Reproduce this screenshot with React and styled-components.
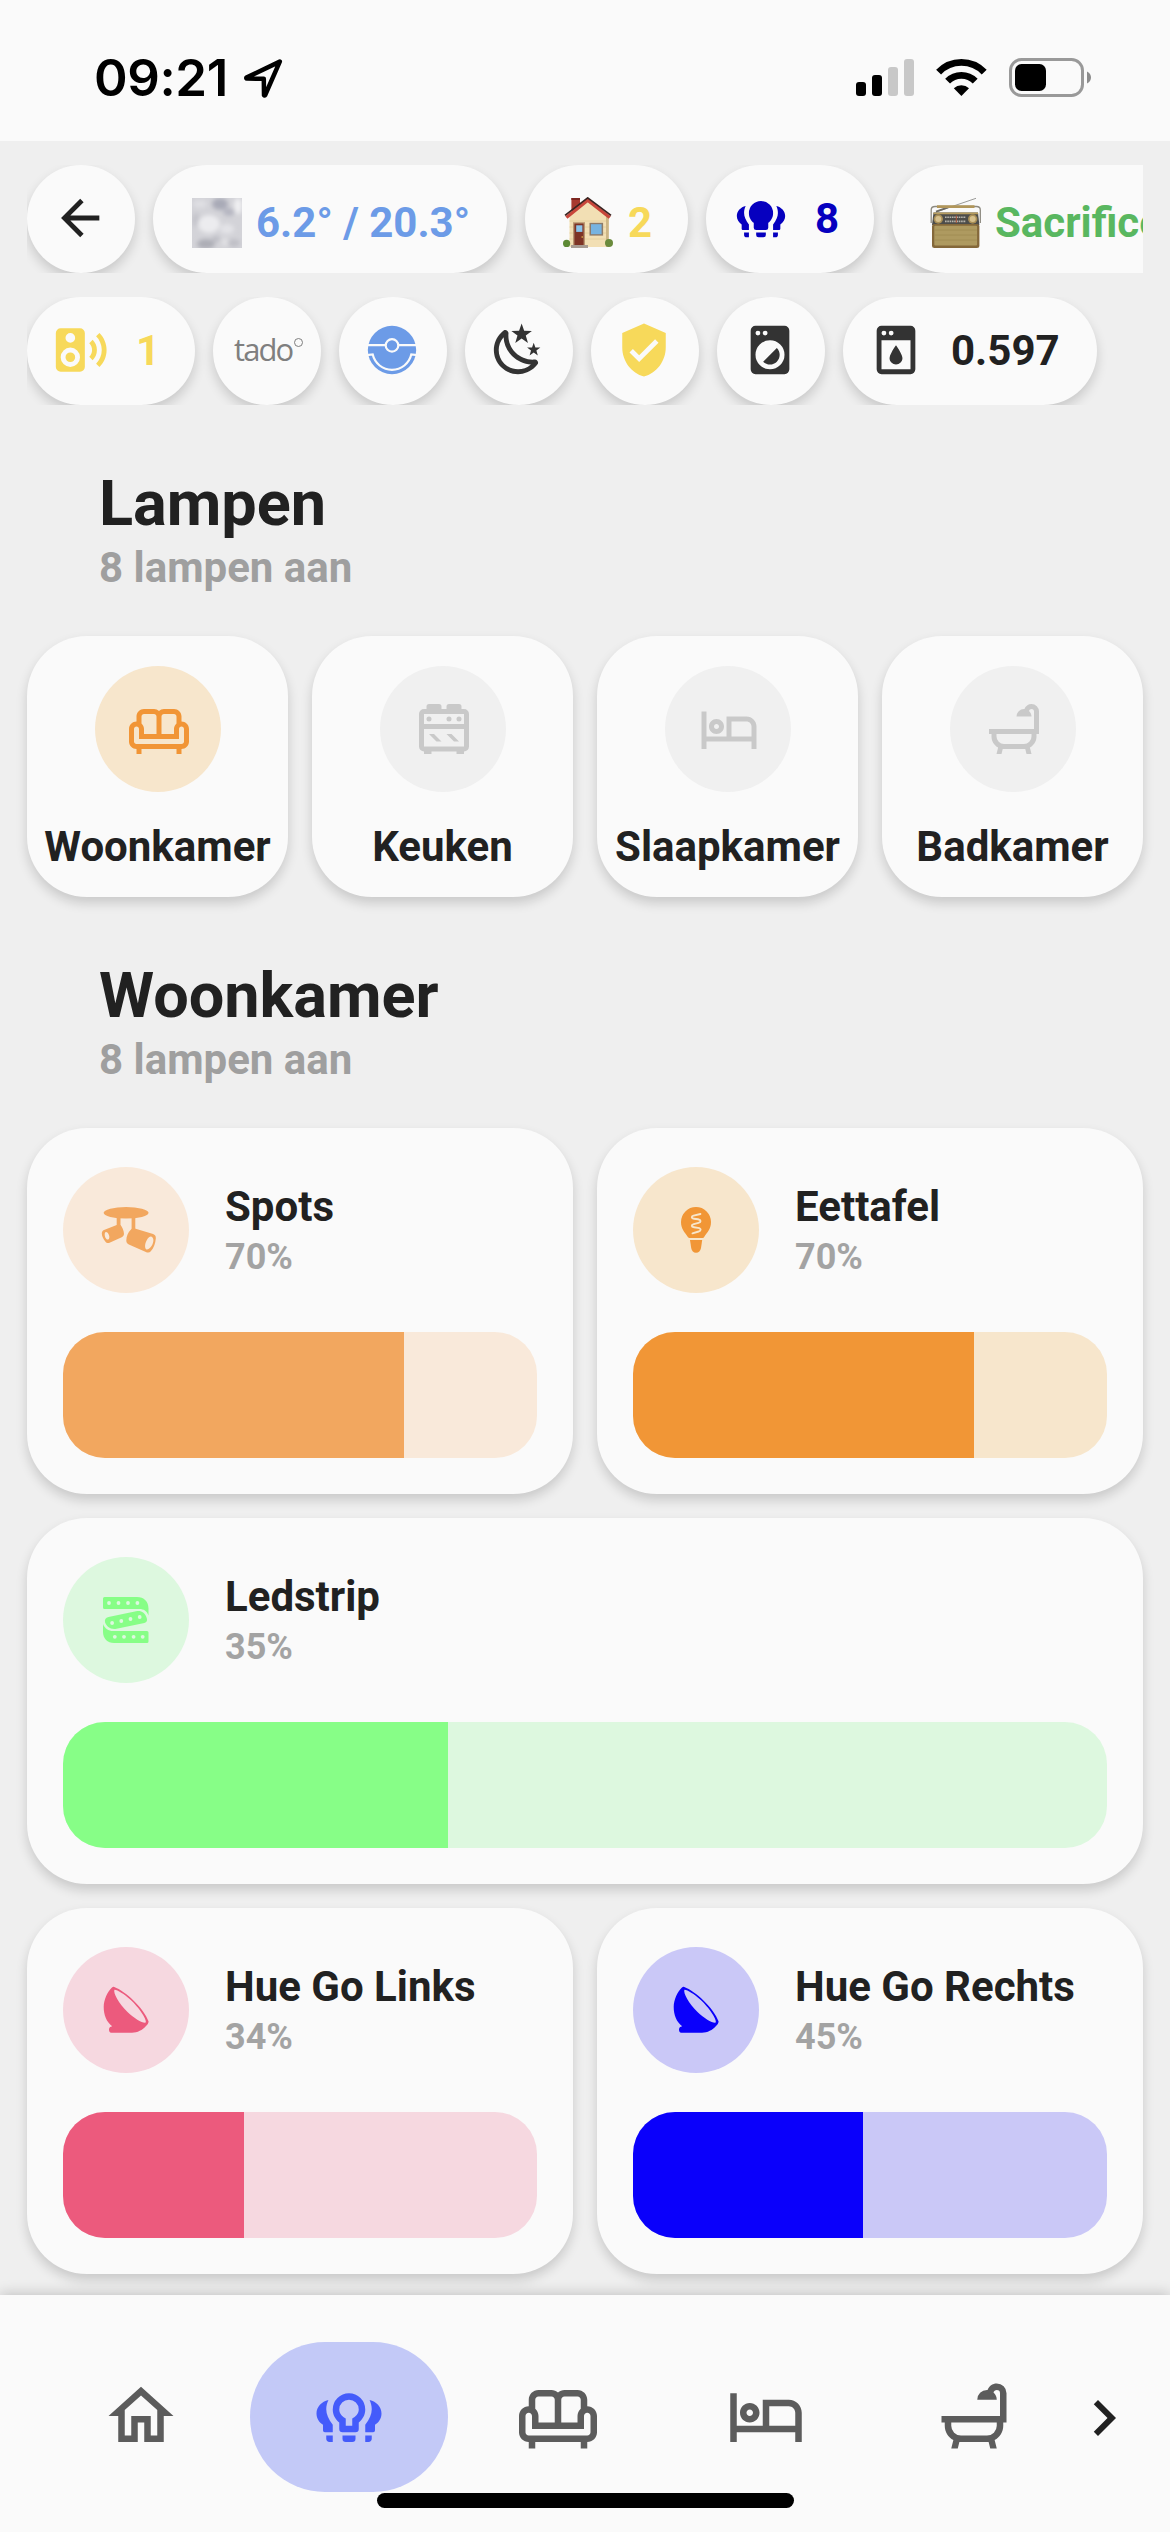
import React from "react";
import styled, { createGlobalStyle } from "styled-components";

const GlobalStyle = createGlobalStyle`
  *, *::before, *::after { box-sizing: border-box; }
  body {
    margin: 0;
    background: #efefef;
    font-family: Roboto, "Liberation Sans", sans-serif;
    color: #212121;
  }
  svg { display: block; flex: none; }
`;

const Screen = styled.div`
  position: relative;
  display: flex;
  flex-direction: column;
  width: 1170px;
  height: 2532px;
  overflow: hidden;
  background: #efefef;
`;

const StatusBar = styled.header`
  flex: none;
  height: 141px;
  display: flex;
  justify-content: space-between;
  padding: 57px 79px 0 94px;
  background: #fafafa;
`;

const StatusGroup = styled.div`
  display: flex;
  align-items: flex-start;
  height: 42px;
`;

const Clock = styled.span`
  width: 149px;
  font: 600 51px/42px Inter, Roboto, sans-serif;
  letter-spacing: -0.4px;
  white-space: nowrap;
  color: #000;
`;

const Content = styled.main`
  flex: 1;
  min-height: 0;
  padding: 24px 27px 0;
`;

const ChipRow = styled.div`
  display: flex;
  gap: 18px;
  height: 108px;
  margin-bottom: ${(p) => (p.$last ? 0 : 24)}px;
  overflow: hidden;
`;

const Chip = styled.div`
  flex: none;
  display: flex;
  align-items: flex-start;
  width: ${(p) => p.$width || 108}px;
  height: 108px;
  padding-left: ${(p) => p.$inset ?? 24}px;
  border-radius: 54px;
  background: #fafafa;
  box-shadow: 0 6px 12px rgba(0, 0, 0, 0.16);
  color: ${(p) => p.$color || "#333"};

  > svg { margin-top: ${(p) => p.$top ?? 24}px; }
`;

const ChipText = styled.span`
  margin: ${(p) => (p.$low ? 34 : 30)}px 0 0 ${(p) => p.$gap}px;
  font-size: 42px;
  font-weight: 700;
  line-height: 48px;
  white-space: nowrap;
  color: ${(p) => p.$color || "inherit"};
`;

const TadoMark = styled.span`
  display: flex;
  margin-top: 36px;
  font: 400 31px/32px "Open Sans", "Noto Sans", sans-serif;
  letter-spacing: -1.9px;
  color: #7f7f7f;
`;

const Degree = styled.i`
  width: 9px;
  height: 9px;
  margin: 5px 0 0 2px;
  border: 1px solid #7f7f7f;
  border-radius: 50%;
`;

const SectionHead = styled.div`
  height: 231px;
  padding: 63px 0 0 72px;
`;

const Title = styled.h2`
  margin: 0;
  height: 76px;
  font-size: 63px;
  font-weight: 700;
  line-height: 72px;
`;

const Subtitle = styled.p`
  margin: 0;
  font-size: 42px;
  font-weight: 700;
  line-height: 48px;
  color: #9f9f9f;
`;

const RoomGrid = styled.div`
  display: grid;
  grid-template-columns: repeat(4, 1fr);
  gap: 24px;
`;

const Card = styled.section`
  border-radius: 60px;
  background: #fafafa;
  box-shadow: 0 6px 12px rgba(0, 0, 0, 0.16);
`;

const RoomCard = styled(Card)`
  display: flex;
  flex-direction: column;
  align-items: center;
  height: 261px;
  padding-top: 30px;
`;

const Bubble = styled.div`
  flex: none;
  display: flex;
  align-items: center;
  justify-content: center;
  width: 126px;
  height: 126px;
  padding-left: ${(p) => p.$nudge || 0}px;
  border-radius: 50%;
  background: ${(p) => p.$bg};
  color: ${(p) => p.$fg};
`;

const RoomName = styled.span`
  margin-top: 31px;
  font-size: 42px;
  font-weight: 700;
  line-height: 48px;
  white-space: nowrap;
`;

const LightGrid = styled.div`
  display: grid;
  grid-template-columns: 1fr 1fr;
  gap: 24px;
`;

const LightCard = styled(Card)`
  grid-column: ${(p) => (p.$wide ? "1 / -1" : "auto")};
  height: 366px;
  padding: 39px 36px 36px;
`;

const LightTop = styled.div`
  display: flex;
  align-items: center;
  gap: 36px;
  margin-bottom: 39px;
`;

const LightText = styled.div`
  display: flex;
  flex-direction: column;
  gap: 5px;
`;

const LightName = styled.span`
  font-size: 42px;
  font-weight: 700;
  line-height: 48px;
`;

const LightLevel = styled.span`
  font-size: 36px;
  font-weight: 700;
  line-height: 42px;
  color: #a3a3a3;
`;

const Slider = styled.div`
  height: 126px;
  border-radius: 42px;
  overflow: hidden;
  background: ${(p) => p.$bg};
`;

const SliderFill = styled.div`
  width: calc(30px + (100% - 30px) * ${(p) => p.$level / 100});
  height: 100%;
  background: ${(p) => p.$fg};
`;

const NavBar = styled.nav`
  position: relative;
  flex: none;
  display: flex;
  align-items: flex-start;
  height: 237px;
  padding: 47px 30px 0 37px;
  background: #fafafa;
  box-shadow: 0 -2px 12px rgba(0, 0, 0, 0.18);
`;

const NavItems = styled.div`
  display: flex;
  width: 1041px;
`;

const NavItem = styled.div`
  flex: 1;
  display: flex;
  justify-content: center;
`;

const NavPill = styled.div`
  display: flex;
  justify-content: center;
  width: 198px;
  height: 150px;
  padding-top: 35px;
  border-radius: 75px;
  background: ${(p) => (p.$active ? "#c3c9f7" : "transparent")};
  color: ${(p) => (p.$active ? "#445bfb" : "#5c5c5c")};
`;

const NavMore = styled.div`
  margin: 40px 0 0 -10px;
`;

const HomeIndicator = styled.div`
  position: absolute;
  left: 377px;
  bottom: 24px;
  width: 417px;
  height: 15px;
  border-radius: 8px;
  background: #000;
`;

const PATHS = {
  back: "M20,11V13H8L13.5,18.5L12.08,19.92L4.16,12L12.08,4.08L13.5,5.5L8,11H20Z",
  chevron: "M8.59,16.58L13.17,12L8.59,7.41L10,6L16,12L10,18L8.59,16.58Z",
  home: "M12 5.69L17 10.19V18H15V12H9V18H7V10.19L12 5.69M12 3L2 12H5V20H11V14H13V20H19V12H22",
  sofa: "M21 9V7C21 5.35 19.65 4 18 4H14C13.23 4 12.53 4.3 12 4.78C11.47 4.3 10.77 4 10 4H6C4.35 4 3 5.35 3 7V9C1.35 9 0 10.35 0 12V17C0 18.65 1.35 20 3 20V22H5V20H19V22H21V20C22.65 20 24 18.65 24 17V12C24 10.35 22.65 9 21 9M14 6H18C18.55 6 19 6.45 19 7V9.78C18.39 10.33 18 11.12 18 12V14H13V7C13 6.45 13.45 6 14 6M5 7C5 6.45 5.45 6 6 6H10C10.55 6 11 6.45 11 7V14H6V12C6 11.12 5.61 10.33 5 9.78V7M22 17C22 17.55 21.55 18 21 18H3C2.45 18 2 17.55 2 17V12C2 11.45 2.45 11 3 11C3.55 11 4 11.45 4 12V16H20V12C20 11.45 20.45 11 21 11C21.55 11 22 11.45 22 12V17Z",
  stove: "M6,14H8L11,17H9L6,14M4,4H5V3A1,1 0 0,1 6,2H10A1,1 0 0,1 11,3V4H13V3A1,1 0 0,1 14,2H18A1,1 0 0,1 19,3V4H20A2,2 0 0,1 22,6V19A2,2 0 0,1 20,21V22H17V21H7V22H4V21A2,2 0 0,1 2,19V6A2,2 0 0,1 4,4M18,7A1,1 0 0,1 19,8A1,1 0 0,1 18,9A1,1 0 0,1 17,8A1,1 0 0,1 18,7M14,7A1,1 0 0,1 15,8A1,1 0 0,1 14,9A1,1 0 0,1 13,8A1,1 0 0,1 14,7M20,6H4V10H20V6M4,19H20V12H4V19M6,7A1,1 0 0,1 7,8A1,1 0 0,1 6,9A1,1 0 0,1 5,8A1,1 0 0,1 6,7M13,14H15L18,17H16L13,14Z",
  bed: "M7 14C8.66 14 10 12.66 10 11C10 9.34 8.66 8 7 8C5.34 8 4 9.34 4 11C4 12.66 5.34 14 7 14M7 10C7.55 10 8 10.45 8 11C8 11.55 7.55 12 7 12C6.45 12 6 11.55 6 11C6 10.45 6.45 10 7 10M19 7H11V15H3V5H1V20H3V17H21V20H23V11C23 8.79 21.21 7 19 7M21 15H13V9H19C20.1 9 21 9.9 21 11Z",
  bath: "M21,14V15C21,16.91 19.93,18.57 18.35,19.41L19,22H17L16.5,20C16.33,20 16.17,20 16,20H8C7.83,20 7.67,20 7.5,20L7,22H5L5.65,19.41C4.07,18.57 3,16.91 3,15V14H2V12H20V5A1,1 0 0,0 19,4C18.5,4 18.12,4.34 18,4.79C18.63,5.33 19,6.13 19,7H13A3,3 0 0,1 16,4C16.06,4 16.11,4 16.17,4C16.58,2.84 17.69,2 19,2A3,3 0 0,1 22,5V14H21M19,14H5V15A3,3 0 0,0 8,18H16A3,3 0 0,0 19,15V14Z",
  speaker: "M20.07,19.07L18.66,17.66C20.11,16.22 21,14.21 21,12C21,9.78 20.11,7.78 18.66,6.34L20.07,4.93C21.88,6.74 23,9.24 23,12C23,14.76 21.88,17.26 20.07,19.07M17.24,16.24L15.83,14.83C16.55,14.11 17,13.11 17,12C17,10.89 16.55,9.89 15.83,9.17L17.24,7.76C18.33,8.85 19,10.35 19,12C19,13.65 18.33,15.15 17.24,16.24M4,3H12A2,2 0 0,1 14,5V19A2,2 0 0,1 12,21H4A2,2 0 0,1 2,19V5A2,2 0 0,1 4,3M8,5A2,2 0 0,0 6,7A2,2 0 0,0 8,9A2,2 0 0,0 10,7A2,2 0 0,0 8,5M8,11A4,4 0 0,0 4,15A4,4 0 0,0 8,19A4,4 0 0,0 12,15A4,4 0 0,0 8,11M8,13A2,2 0 0,1 10,15A2,2 0 0,1 8,17A2,2 0 0,1 6,15A2,2 0 0,1 8,13Z",
  night: "M17.75,4.09L15.22,6.03L16.13,9.09L13.5,7.28L10.87,9.09L11.78,6.03L9.25,4.09L12.44,4L13.5,1L14.56,4L17.75,4.09M21.25,11L19.61,12.25L20.2,14.23L18.5,13.06L16.8,14.23L17.39,12.25L15.75,11L17.81,10.95L18.5,9L19.19,10.95L21.25,11M18.97,15.95C19.8,15.87 20.69,17.05 20.16,17.8C19.84,18.25 19.5,18.67 19.08,19.07C15.17,23 8.84,23 4.94,19.07C1.03,15.17 1.03,8.83 4.94,4.93C5.34,4.53 5.76,4.17 6.21,3.85C6.96,3.32 8.14,4.21 8.06,5.04C7.79,7.9 8.75,10.87 10.95,13.06C13.14,15.26 16.1,16.22 18.97,15.95M17.33,17.97C14.5,17.81 11.7,16.64 9.53,14.5C7.36,12.31 6.2,9.5 6.04,6.68C3.23,9.82 3.34,14.64 6.35,17.66C9.37,20.67 14.19,20.78 17.33,17.97Z",
  shield: "M10,17L6,13L7.41,11.59L10,14.17L16.59,7.58L18,9M12,1L3,5V11C3,16.55 6.84,21.74 12,23C17.16,21.74 21,16.55 21,11V5L12,1Z",
  washer: "M14.83,11.17C16.39,12.73 16.39,15.27 14.83,16.83C13.27,18.39 10.73,18.39 9.17,16.83L14.83,11.17M6,2H18A2,2 0 0,1 20,4V20A2,2 0 0,1 18,22H6A2,2 0 0,1 4,20V4A2,2 0 0,1 6,2M7,4A1,1 0 0,0 6,5A1,1 0 0,0 7,6A1,1 0 0,0 8,5A1,1 0 0,0 7,4M10,4A1,1 0 0,0 9,5A1,1 0 0,0 10,6A1,1 0 0,0 11,5A1,1 0 0,0 10,4M12,8A6,6 0 0,0 6,14A6,6 0 0,0 12,20A6,6 0 0,0 18,14A6,6 0 0,0 12,8Z",
  dishwasher: "M18,2H6A2,2 0 0,0 4,4V20A2,2 0 0,0 6,22H18A2,2 0 0,0 20,20V4A2,2 0 0,0 18,2M10,4A1,1 0 0,1 11,5A1,1 0 0,1 10,6A1,1 0 0,1 9,5A1,1 0 0,1 10,4M7,4A1,1 0 0,1 8,5A1,1 0 0,1 7,6A1,1 0 0,1 6,5A1,1 0 0,1 7,4M18,20H6V8H18V20M14.67,15.33C14.69,16.03 14.41,16.71 13.91,17.21C12.86,18.26 11.15,18.27 10.09,17.21C9.59,16.71 9.31,16.03 9.33,15.33C9.4,14.62 9.63,13.94 10,13.33C10.37,12.5 10.81,11.73 11.33,11L12,10C13.79,12.59 14.67,14.36 14.67,15.33",
};

const Icon = ({ name, size = 58, color = "currentColor" }) => (
  <svg width={size} height={size} viewBox="0 0 24 24" fill={color} fillRule="evenodd">
    <path d={PATHS[name]} />
  </svg>
);

const BulbGroup = ({ size = 58, outline }) => (
  <svg width={size} height={size} viewBox="0 0 24 24" fill="currentColor" fillRule="evenodd">
    <path d="M5.67 7.05C3.6 7.5 2 9.2 2 11.2C2 12.7 2.8 13.9 4 14.7V16.4C4 16.75 4.25 17 4.6 17H7V14.7C5.7 13 5 11.4 5 9.9C5 8.9 5.25 7.9 5.67 7.05ZM5 18H7V20H6C5.4 20 5 19.6 5 19Z" />
    <path d="M18.33 7.05C20.4 7.5 22 9.2 22 11.2C22 12.7 21.2 13.9 20 14.7V16.4C20 16.75 19.75 17 19.4 17H17V14.7C18.3 13 19 11.4 19 9.9C19 8.9 18.75 7.9 18.33 7.05ZM19 18H17V20H18C18.6 20 19 19.6 19 19Z" />
    <path
      d={
        "M12 5A5 5 0 0 0 7 10C7 11.9 8 13.2 9 14V16A1 1 0 0 0 10 17H14A1 1 0 0 0 15 16V14C16 13.2 17 11.9 17 10A5 5 0 0 0 12 5Z" +
        (outline
          ? "M12 7A3 3 0 0 1 15 10C15 11.4 14 12.2 13 12.8V15H11V12.8C10 12.2 9 11.4 9 10A3 3 0 0 1 12 7Z"
          : "")
      }
    />
    <path d="M10 18H14V19A1 1 0 0 1 13 20H11A1 1 0 0 1 10 19Z" />
  </svg>
);

const Vacuum = () => (
  <svg width="58" height="58" viewBox="0 0 24 24">
    <circle cx="12" cy="12" r="10" fill="currentColor" />
    <g fill="none" stroke="#fafafa" strokeWidth=".9">
      <path d="M2 10H9.3M14.7 10H22" />
      <circle cx="12" cy="10.1" r="2.6" />
      <path d="M1.5 14.1L4 13.8A8.2 8.2 0 0 0 20 13.8L22.5 14.1" />
    </g>
  </svg>
);

const SpotsIcon = () => (
  <svg width="60" height="60" viewBox="0 0 60 60" fill="currentColor" fillRule="evenodd">
    <ellipse cx="30.1" cy="12.8" rx="22.4" ry="5.8" />
    <path d="M20.7 17H24.5V28H20.7ZM35.6 17H39.3V31H35.6Z" />
    <path d="M8 30L20.7 25H24.5C26.2 27 28 30.5 28 34C27.8 36 26.8 36.6 25.7 37.2L13 43C11.6 43.3 10.2 42.8 9.3 41.5C7.2 38.8 6 36.5 5.8 33.5C6 31.6 6.6 30.5 8 30ZM9.8 31.9C7.6 32.6 8.9 39.8 12.2 39.6C14.7 38.6 13 31.8 9.8 31.9Z" />
    <path d="M38 28.2L57.1 34.1C59.2 35 60 36.4 59.8 38.5C59.4 43 58 47.7 54.8 51.3C53.8 52.5 52.5 52.9 51 52.4L33.4 44.8C31.2 43.8 30.3 42.5 30.3 40.4C30.4 36 32 32.2 35 29.4C36 28.3 36.8 28 38 28.2ZM55 36.4C51 36.2 46.8 47.5 50.5 49.5C55.5 50 60.5 38.2 55 36.4Z" />
  </svg>
);

const BulbIcon = ({ bg }) => (
  <svg width="60" height="60" viewBox="0 0 60 60" fill="currentColor">
    <path d="M30 7A15 15 0 0 0 15 22C15 29 18.5 32 22 37.2C22.3 37.8 23 38 24 38H36C37 38 37.7 37.8 38 37.2C41.5 32 45 29 45 22A15 15 0 0 0 30 7Z" />
    <path d="M24 40H36.2L35 48C34.3 51 32.8 52.7 30 52.7C27.4 52.7 25.8 51 25.2 48Z" />
    <path
      d="M34.4 14L27.6 15.6C25 16.4 25.3 18.4 28 18.7L32 19.3C35.4 20 35.2 22 32.5 22.8L27.8 24.2C25 25 25.2 27 28 27.3L32 27.9C35.5 28.5 35.2 30.6 32.6 31.5L26.5 33.4"
      fill="none"
      stroke={bg}
      strokeWidth="1.9"
      strokeLinecap="round"
    />
  </svg>
);

const StripIcon = ({ bg }) => (
  <svg width="60" height="60" viewBox="0 0 60 60" fill="currentColor">
    <path d="M8.5 7H41C48 7 52.5 11.5 52.5 18.5V25.5C51 21 47.5 19 43.5 19H8.5Q7 19 7 17.5V8.5Q7 7 8.5 7Z" />
    <path d="M12.5 27L40 21.3C45 20.3 49 22.5 50.8 28.3C51.5 31 50.8 32.3 48.4 32.9L20.5 38.8C14.5 40 10.5 36.5 9 32.3C8.4 29.6 9.5 27.7 12.5 27Z" />
    <path d="M7 34C8.8 38.8 12.5 41 17 41H51Q52.5 41 52.5 42.5V51.5Q52.5 53 51 53H18C11.5 53 7 48.5 7 42Z" />
    <g fill={bg}>
      {[13, 22.5, 32, 41.4].map((x) => <circle key={x} cx={x} cy="13" r="1.9" />)}
      {[[16.1, 33], [25.3, 31], [34.5, 29], [43.7, 27]].map(([x, y]) => <circle key={x} cx={x} cy={y} r="1.9" />)}
      {[18.8, 28, 37.6, 46.7].map((x) => <circle key={x} cx={x} cy="46.8" r="1.9" />)}
    </g>
  </svg>
);

const HueGoIcon = () => (
  <svg width="60" height="60" viewBox="0 0 60 60" fill="currentColor" fillRule="evenodd">
    <path d="M18.3 7C29 11 48 28 52.6 41.5C52.4 43.5 51.5 44.6 50 46C46.5 50 41.5 52.7 36 52.7H15.3C13.6 52.7 13 51.5 13 49.6C13 47.5 14.2 46.8 16.2 46.3C10.5 42 7.7 35 7.7 27C7.8 20 11.5 11.5 16 7.6C16.8 6.9 17.5 6.7 18.3 7ZM18.4 9.8C17 13 23 24 31.5 32C38.5 38.8 47 43.6 49.8 42.6C51 39.5 43 27.5 34.5 19.8C28 13.8 20.5 9.3 18.4 9.8Z" />
  </svg>
);

const FogPicture = () => (
  <svg width="50" height="50" viewBox="0 0 50 50">
    <defs>
      <filter id="fog" x="-30%" y="-30%" width="160%" height="160%">
        <feGaussianBlur stdDeviation="2.2" />
      </filter>
      <clipPath id="fogClip"><rect width="50" height="50" /></clipPath>
    </defs>
    <g clipPath="url(#fogClip)">
      <rect width="50" height="50" fill="#d3d3d8" />
      <g filter="url(#fog)">
        <ellipse cx="28" cy="6" rx="8" ry="6" fill="#a9aab7" />
        <ellipse cx="37" cy="14" rx="6" ry="4" fill="#b5b6c1" />
        <ellipse cx="14" cy="46" rx="9" ry="5" fill="#adaeb6" />
        <ellipse cx="24" cy="41" rx="4" ry="3" fill="#bdbec5" />
        <ellipse cx="42" cy="45" rx="6" ry="4" fill="#bfbfc6" />
        <ellipse cx="4" cy="22" rx="4" ry="7" fill="#c4c4cb" />
        <ellipse cx="17" cy="26" rx="11" ry="9" fill="#ececef" />
        <ellipse cx="35" cy="31" rx="7" ry="5" fill="#e3e3e7" />
        <ellipse cx="46" cy="8" rx="4" ry="8" fill="#f0f0f2" />
        <ellipse cx="8" cy="6" rx="7" ry="4" fill="#dfdfe3" />
        <ellipse cx="33" cy="44" rx="3" ry="4" fill="#e2e2e5" />
      </g>
    </g>
  </svg>
);

const HousePicture = () => (
  <svg width="50" height="52" viewBox="0 0 50 52">
    <path d="M8.4 1H17V14H8.4Z" fill="#a8392f" />
    <path d="M8.4 1H17V3H8.4Z" fill="#7c2620" />
    <path d="M6.5 19L24.7 4L45.5 20V50H6.5Z" fill="#f2dfb4" />
    <path d="M6.5 24H45M6.5 30H45M6.5 36H45M6.5 42H45" stroke="#e2cb9a" strokeWidth=".8" />
    <path d="M43 18L45.8 20V50H43Z" fill="#cdb585" />
    <path d="M3.4 20.5L24.7 3.2L46.8 20.5" fill="none" stroke="#c8473b" strokeWidth="3.4" />
    <path d="M2 18.4L24.7 .9L48 18.4" fill="none" stroke="#3a2421" strokeWidth="1.7" />
    <rect x="10" y="25.2" width="12" height="23" fill="#b99772" />
    <rect x="11.4" y="26.5" width="9.2" height="21.5" fill="#7d3325" />
    <rect x="13.2" y="28.3" width="6.2" height="6.6" fill="#8cc4ea" />
    <circle cx="19.2" cy="40" r=".8" fill="#e8c34e" />
    <rect x="26.5" y="25.8" width="13.6" height="12.8" fill="#8d7b69" />
    <rect x="28" y="27.2" width="10.6" height="10" fill="#77b3e0" />
    <rect x="8" y="48" width="17" height="3" fill="#a79b92" />
    <circle cx="3.6" cy="46.4" r="3.6" fill="#5d8a35" />
    <circle cx="46" cy="46" r="4" fill="#6a8a3c" />
  </svg>
);

const RadioPicture = () => (
  <svg width="52" height="52" viewBox="0 0 52 52">
    <path d="M6 15L46 1.3" stroke="#9b9b98" strokeWidth="1" />
    <path d="M6 14.6L18 10.3" stroke="#6c6a63" strokeWidth="1.8" />
    <path d="M1.2 26V13Q1.2 9.5 5 9.5H46.5Q50.3 9.5 50.3 13V26" fill="none" stroke="#8d8a80" strokeWidth="1.3" />
    <path d="M7 9.6H44.5" stroke="#b1965a" strokeWidth="2.8" />
    <path d="M3.5 15.6H48L49.4 28H2Z" fill="#4d4d4a" />
    <path d="M3.5 15.6H48L48.2 17.2H3.3Z" fill="#b79d5f" />
    <rect x="2" y="27" width="47.4" height="24" rx="2.5" fill="#84683a" />
    <rect x="4.3" y="28.8" width="42.8" height="19.6" rx="1" fill="#ae9a60" />
    <path d="M4.3 33H47M4.3 38H47M4.3 43H47" stroke="#a08c52" strokeWidth=".8" />
    <path d="M15 20.2H36M15 24.4H36" stroke="#b8b5ac" strokeWidth="1.6" strokeDasharray="1.6 .7" />
    <path d="M26.3 18.5V26" stroke="#b0563b" strokeWidth="1" />
    <circle cx="8.3" cy="22" r="4.7" fill="#a88e56" />
    <circle cx="8.3" cy="22" r="3" fill="#d6c08c" />
    <circle cx="42.7" cy="22" r="4.7" fill="#a88e56" />
    <circle cx="42.7" cy="22" r="3" fill="#d6c08c" />
  </svg>
);

const LocationArrow = () => (
  <svg width="42" height="42" viewBox="0 0 42 42">
    <path
      d="M36.8 4.6L3.4 20.6Q3 21.4 4 21.6L20.8 21.8L21 38.2Q21.6 39 22.2 38Z"
      fill="none"
      stroke="#000"
      strokeWidth="4.5"
      strokeLinejoin="round"
    />
  </svg>
);

const StatusIcons = () => (
  <svg width="236" height="42" viewBox="0 0 236 42">
    <rect x="1" y="25" width="10" height="14" rx="3" />
    <rect x="17" y="18" width="10" height="21" rx="3" />
    <rect x="33" y="10" width="10" height="29" rx="3" fill="#c8c8c8" />
    <rect x="49" y="2" width="10" height="37" rx="3" fill="#c8c8c8" />
    <g fill="none" stroke="#000" strokeWidth="6.8">
      <path d="M83.6 15.2A31.5 31.5 0 0 1 129.2 15.2" />
      <path d="M92.6 24.2A19.4 19.4 0 0 1 120.2 24.2" />
    </g>
    <path d="M106.4 39L98.8 31.2A11 11 0 0 1 114 31.2Z" />
    <rect x="155.5" y="2.5" width="72" height="36" rx="11" fill="none" stroke="#999" strokeWidth="3" />
    <rect x="160" y="7" width="31" height="27" rx="6.5" />
    <path d="M232 14.5C235 16 236 18.5 236 20.5S235 25 232 26.5Z" fill="#8c8c8c" />
  </svg>
);

const IDLE = { fg: "#c9c9c9", bg: "#f0f0f0" };

const rooms = [
  { name: "Woonkamer", icon: "sofa", fg: "#f19536", bg: "#f7e6cc" },
  { name: "Keuken", icon: "stove", ...IDLE },
  { name: "Slaapkamer", icon: "bed", ...IDLE },
  { name: "Badkamer", icon: "bath", ...IDLE },
];

const lights = [
  { name: "Spots", level: 70, Glyph: SpotsIcon, fg: "#f2a75f", bg: "#f9e9da" },
  { name: "Eettafel", level: 70, Glyph: BulbIcon, fg: "#f19636", bg: "#f7e6cc" },
  { name: "Ledstrip", level: 35, Glyph: StripIcon, fg: "#87fe87", bg: "#ddf8df", wide: true },
  { name: "Hue Go Links", level: 34, Glyph: HueGoIcon, fg: "#ec5a7d", bg: "#f6d8e0" },
  { name: "Hue Go Rechts", level: 45, Glyph: HueGoIcon, fg: "#0a00fb", bg: "#cac8f7" },
];

const Section = ({ title }) => (
  <SectionHead>
    <Title>{title}</Title>
    <Subtitle>8 lampen aan</Subtitle>
  </SectionHead>
);

export default function App() {
  return (
    <Screen>
      <GlobalStyle />
      <StatusBar>
        <StatusGroup>
          <Clock>09:21</Clock>
          <LocationArrow />
        </StatusGroup>
        <StatusGroup>
          <StatusIcons />
        </StatusGroup>
      </StatusBar>

      <Content>
        <ChipRow>
          <Chip $color="#212121"><Icon name="back" /></Chip>
          <Chip $width={354} $inset={39} $top={33} $color="#6c9be7">
            <FogPicture />
            <ChipText $low $gap={14}>6.2° / 20.3°</ChipText>
          </Chip>
          <Chip $width={163} $inset={38} $top={32} $color="#f7d95a">
            <HousePicture />
            <ChipText $low $gap={15}>2</ChipText>
          </Chip>
          <Chip $width={168} $inset={26} $color="#0600bf">
            <BulbGroup />
            <ChipText $gap={25}>8</ChipText>
          </Chip>
          <Chip $width={420} $inset={38} $top={32} $color="#59b760">
            <RadioPicture />
            <ChipText $low $gap={13}>Sacrifice</ChipText>
          </Chip>
        </ChipRow>

        <ChipRow $last>
          <Chip $width={168} $color="#f7d95a">
            <Icon name="speaker" />
            <ChipText $gap={27}>1</ChipText>
          </Chip>
          <Chip $inset={21}>
            <TadoMark>tado<Degree /></TadoMark>
          </Chip>
          <Chip $color="#6c9be7"><Vacuum /></Chip>
          <Chip><Icon name="night" /></Chip>
          <Chip $color="#f7d95a"><Icon name="shield" /></Chip>
          <Chip><Icon name="washer" /></Chip>
          <Chip $width={253.5}>
            <Icon name="dishwasher" />
            <ChipText $gap={26} $color="#212121">0.597</ChipText>
          </Chip>
        </ChipRow>

        <Section title="Lampen" />
        <RoomGrid>
          {rooms.map((r) => (
            <RoomCard key={r.name}>
              <Bubble $fg={r.fg} $bg={r.bg} $nudge={2}>
                <Icon name={r.icon} size={60} />
              </Bubble>
              <RoomName>{r.name}</RoomName>
            </RoomCard>
          ))}
        </RoomGrid>

        <Section title="Woonkamer" />
        <LightGrid>
          {lights.map(({ name, level, Glyph, fg, bg, wide }) => (
            <LightCard key={name} $wide={wide}>
              <LightTop>
                <Bubble $fg={fg} $bg={bg}><Glyph bg={bg} /></Bubble>
                <LightText>
                  <LightName>{name}</LightName>
                  <LightLevel>{level}%</LightLevel>
                </LightText>
              </LightTop>
              <Slider $bg={bg}><SliderFill $fg={fg} $level={level} /></Slider>
            </LightCard>
          ))}
        </LightGrid>
      </Content>

      <NavBar>
        <NavItems>
          <NavItem><NavPill><Icon name="home" size={78} /></NavPill></NavItem>
          <NavItem><NavPill $active><BulbGroup size={78} outline /></NavPill></NavItem>
          <NavItem><NavPill><Icon name="sofa" size={78} /></NavPill></NavItem>
          <NavItem><NavPill><Icon name="bed" size={78} /></NavPill></NavItem>
          <NavItem><NavPill><Icon name="bath" size={78} /></NavPill></NavItem>
        </NavItems>
        <NavMore><Icon name="chevron" size={72} color="#212121" /></NavMore>
      </NavBar>
      <HomeIndicator />
    </Screen>
  );
}
